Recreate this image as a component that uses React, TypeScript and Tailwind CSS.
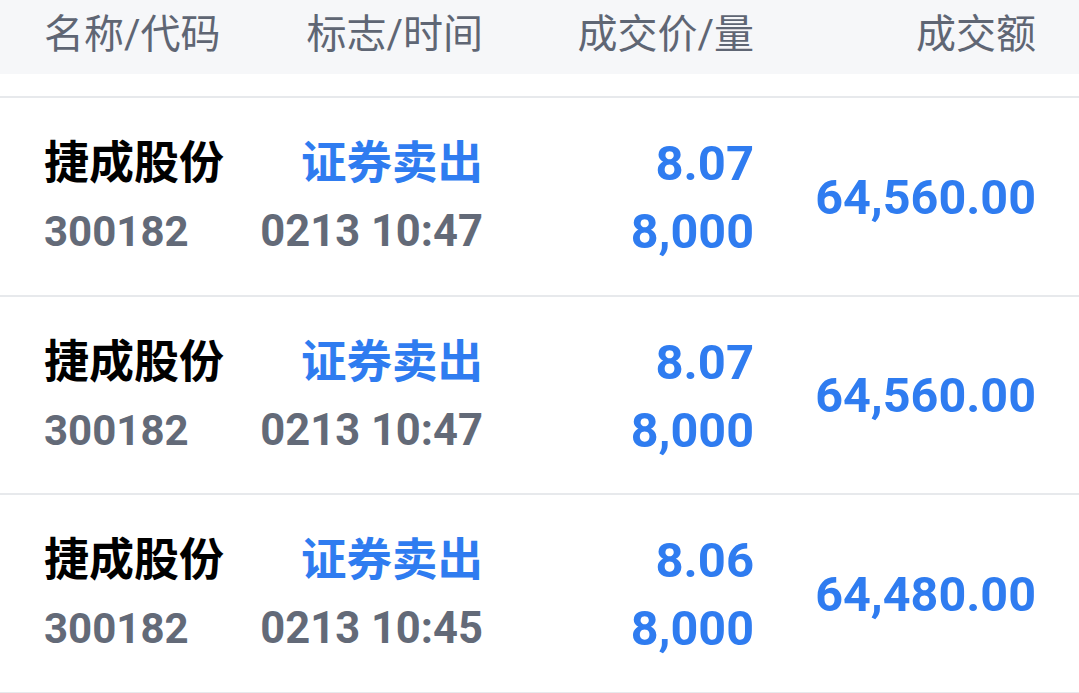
import React from "react";

const rows = [
  { name: "捷成股份", code: "300182", flag: "证券卖出", time: "0213 10:47", price: "8.07", qty: "8,000", amount: "64,560.00" },
  { name: "捷成股份", code: "300182", flag: "证券卖出", time: "0213 10:47", price: "8.07", qty: "8,000", amount: "64,560.00" },
  { name: "捷成股份", code: "300182", flag: "证券卖出", time: "0213 10:45", price: "8.06", qty: "8,000", amount: "64,480.00" },
];

const font = { fontFamily: 'Roboto, "Noto Sans CJK SC", sans-serif' };

export default function App() {
  return (
    <div className="w-[1079px] h-[693px] bg-white overflow-hidden" style={font}>
      <div className="h-[74px] bg-[#f6f7f9] flex items-center pl-[44px] pr-[43px] text-[40px] text-[#5f6674] pb-[4px]">
        <div className="w-[200px]">名称/代码</div>
        <div className="w-[239px] text-right">标志/时间</div>
        <div className="w-[271px] text-right">成交价/量</div>
        <div className="w-[282px] text-right">成交额</div>
      </div>
      <div className="h-[22px]" />
      <div className="border-t-2 border-[#e7e9ec]">
        {rows.map((r, i) => (
          <div key={i} className="h-[198.5px] border-b-2 border-[#e7e9ec] flex items-center pl-[44px] pr-[43px] pt-[4px]">
            <div className="w-[200px] flex flex-col leading-[68px]">
              <div className="text-[45px] font-bold text-black">{r.name}</div>
              <div className="text-[42px] font-bold text-[#636a78]">{r.code}</div>
            </div>
            <div className="w-[239px] flex flex-col items-end leading-[68px]">
              <div className="text-[45.5px] font-bold text-[#2f7cf0]">{r.flag}</div>
              <div className="text-[43.5px] font-bold text-[#636a78]">{r.time}</div>
            </div>
            <div className="w-[271px] flex flex-col items-end leading-[68px] text-[#2f7cf0] font-bold">
              <div className="text-[49px]">{r.price}</div>
              <div className="text-[48.5px]">{r.qty}</div>
            </div>
            <div className="w-[282px] text-right text-[#2f7cf0] font-bold text-[48.5px]">{r.amount}</div>
          </div>
        ))}
      </div>
    </div>
  );
}
